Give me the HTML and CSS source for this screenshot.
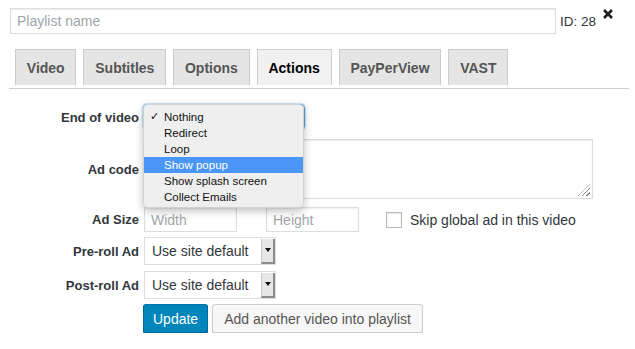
FILE: index.html
```html
<!DOCTYPE html>
<html lang="en-us">

<head>
<title>Edit playlist</title>
<meta charset="utf-8" />
<meta name="viewport" content="width=device-width, initial-scale=1.0">

<link rel="stylesheet" href="styles.css">
</head>

<body>
<div class="editor">

  <div class="title-row">
    <input type="text" class="playlist-name" placeholder="Playlist name">
    <span class="playlist-id">ID: 28</span>
    <span class="close">
      <svg width="10" height="10" viewBox="0 0 10 10"><path d="M1 1 L9 9 M9 1 L1 9" stroke="#1e1e1e" stroke-width="2.6" stroke-linecap="butt"/></svg>
    </span>
  </div>

  <div class="tabs">
    <span class="tab">Video</span>
    <span class="tab">Subtitles</span>
    <span class="tab">Options</span>
    <span class="tab tab-active">Actions</span>
    <span class="tab">PayPerView</span>
    <span class="tab">VAST</span>
  </div>

  <div class="fields">
    <div class="row row-end">
      <label class="row-label">End of video</label>
      <div class="select-focus"></div>
      <!-- open dropdown of the select -->
      <ul class="menu">
        <li><span class="check">&#10003;</span>Nothing</li>
        <li>Redirect</li>
        <li>Loop</li>
        <li class="menu-hover">Show popup</li>
        <li>Show splash screen</li>
        <li>Collect Emails</li>
      </ul>
    </div>

    <div class="row row-code">
      <label class="row-label">Ad code</label>
      <div class="code-box"><span class="grip"></span></div>
    </div>

    <div class="row row-size">
      <label class="row-label">Ad Size</label>
      <input type="text" class="small-input" placeholder="Width">
      <input type="text" class="small-input" placeholder="Height">
      <span class="checkbox"></span>
      <span class="check-label">Skip global ad in this video</span>
    </div>

    <div class="row row-pre">
      <label class="row-label">Pre-roll Ad</label>
      <div class="fake-select"><span class="select-value">Use site default</span><span class="select-arrow"></span></div>
    </div>

    <div class="row row-post">
      <label class="row-label">Post-roll Ad</label>
      <div class="fake-select"><span class="select-value">Use site default</span><span class="select-arrow"></span></div>
    </div>

    <div class="row row-buttons">
      <span class="row-label"></span>
      <span class="button button-primary">Update</span>
      <span class="button">Add another video into playlist</span>
    </div>
  </div>

</div>
</body>

</html>
```

FILE: styles.css
```css
body {
  margin: 0;
  background-color: white;
  font-family: "Liberation Sans", Arial, Helvetica, sans-serif;
  color: #23282d;
  font-size: 14px;
}

.editor {
  padding: 8px 6px 0 9px;
}

.title-row {
  display: flex;
  align-items: center;
  height: 26px;
}

.playlist-name {
  box-sizing: border-box;
  width: 546px;
  height: 26px;
  margin: 0 0 0 1px;
  padding: 0 6px;
  border: 1px solid #ddd;
  box-shadow: inset 0 1px 2px rgba(0, 0, 0, 0.07);
  font-family: inherit;
  font-size: 14px;
  outline: none;
}

::placeholder {
  color: #a0a5aa;
}

.playlist-id {
  margin-left: 4px;
  margin-top: 1px;
  font-size: 13.5px;
  color: #32373c;
}

.close {
  margin-left: 7px;
  margin-top: -14px;
  line-height: 0;
}

.tabs {
  display: flex;
  gap: 7px;
  margin-top: 15px;
  padding: 0 0 3px 6px;
  border-bottom: 1px solid #ccc;
}

.tab {
  display: flex;
  align-items: center;
  box-sizing: border-box;
  height: 36px;
  padding: 1px 10.8px 0;
  background: #e5e5e5;
  border: 1px solid #ccc;
  border-bottom: none;
  font-size: 14px;
  font-weight: bold;
  color: #555;
}

.tab-active {
  background: #f1f1f1;
  color: #000;
}

.fields {
  padding-top: 15px;
}

.row {
  display: flex;
  align-items: center;
  position: relative;
}

.row-label {
  width: 130px;
  margin-right: 4px;
  text-align: right;
  font-size: 13px;
  font-weight: bold;
  color: #32373c;
}

.row-end {
  height: 26px;
}

.select-focus {
  box-sizing: border-box;
  width: 162px;
  height: 26px;
  border: 1px solid #5b9dd9;
  border-radius: 4px;
  box-shadow: 0 0 2px rgba(30, 140, 190, 0.8);
}

.menu {
  position: absolute;
  left: 134px;
  top: 0;
  z-index: 2;
  box-sizing: border-box;
  width: 161px;
  height: 104px;
  margin: 0;
  padding: 4px 0;
  list-style: none;
  background: rgba(238, 238, 238, 0.97);
  border: 1px solid rgba(0, 0, 0, 0.12);
  border-radius: 5px;
  box-shadow: 0 3px 9px rgba(0, 0, 0, 0.25);
  font-size: 11.5px;
  color: #111;
}

.menu li {
  position: relative;
  height: 16px;
  line-height: 16px;
  padding-left: 20px;
}

.menu .check {
  position: absolute;
  left: 6px;
  font-family: "DejaVu Sans", sans-serif;
  font-size: 11px;
}

.menu-hover {
  background: #4a97f8;
  color: white;
}

.row-code {
  margin-top: 9px;
}

.code-box {
  position: relative;
  box-sizing: border-box;
  width: 450px;
  height: 60px;
  border: 1px solid #ddd;
  box-shadow: inset 0 1px 2px rgba(0, 0, 0, 0.07);
}

.grip {
  position: absolute;
  right: 2px;
  bottom: 2px;
  width: 12px;
  height: 12px;
  background: repeating-linear-gradient(135deg, transparent 0 2px, #888 2px 3px);
  clip-path: polygon(100% 0, 100% 100%, 0 100%);
}

.row-size {
  margin-top: 8px;
}

.small-input {
  box-sizing: border-box;
  width: 93px;
  height: 25px;
  margin: 0 28px 0 1px;
  padding: 0 6px;
  border: 1px solid #ddd;
  box-shadow: inset 0 1px 2px rgba(0, 0, 0, 0.07);
  font-family: inherit;
  font-size: 14px;
}

.checkbox {
  box-sizing: border-box;
  width: 16px;
  height: 16px;
  margin-left: -1px;
  border: 1px solid #b4b9be;
  background: #fff;
  box-shadow: inset 0 1px 2px rgba(0, 0, 0, 0.1);
}

.check-label {
  margin-left: 8px;
  color: #32373c;
}

.row-pre {
  margin-top: 5px;
}

.row-post {
  margin-top: 6px;
}

.fake-select {
  display: flex;
  box-sizing: border-box;
  width: 132px;
  height: 28px;
  margin-left: 1px;
  border: 1px solid #ddd;
  background: #fff;
}

.select-value {
  flex: 1;
  padding: 0 0 0 7px;
  line-height: 26px;
  font-size: 14px;
  color: #32373c;
}

.select-arrow {
  position: relative;
  box-sizing: border-box;
  width: 14px;
  margin: 1px 0 0;
  background: #e6e6e6;
  border-left: 1px solid #c8c8c8;
  border-right: 2px solid #8c8c8c;
  border-bottom: 2px solid #8c8c8c;
}

.select-arrow::after {
  content: "";
  position: absolute;
  left: 3px;
  top: 9px;
  border-left: 3px solid transparent;
  border-right: 3px solid transparent;
  border-top: 4px solid #111;
}

.row-buttons {
  margin-top: 5px;
}

.button {
  display: flex;
  align-items: center;
  box-sizing: border-box;
  height: 29px;
  padding: 0 11px;
  margin-left: 4px;
  background: #f7f7f7;
  border: 1px solid #ccc;
  border-radius: 3px;
  box-shadow: 0 1px 0 #ccc;
  font-size: 14px;
  color: #555;
}

.button-primary {
  margin-left: 0;
  padding: 0 9px;
  background: #0085ba;
  border-color: #0073aa #006799 #006799;
  box-shadow: 0 1px 0 #006799;
  color: #fff;
  font-weight: 500;
}
```
